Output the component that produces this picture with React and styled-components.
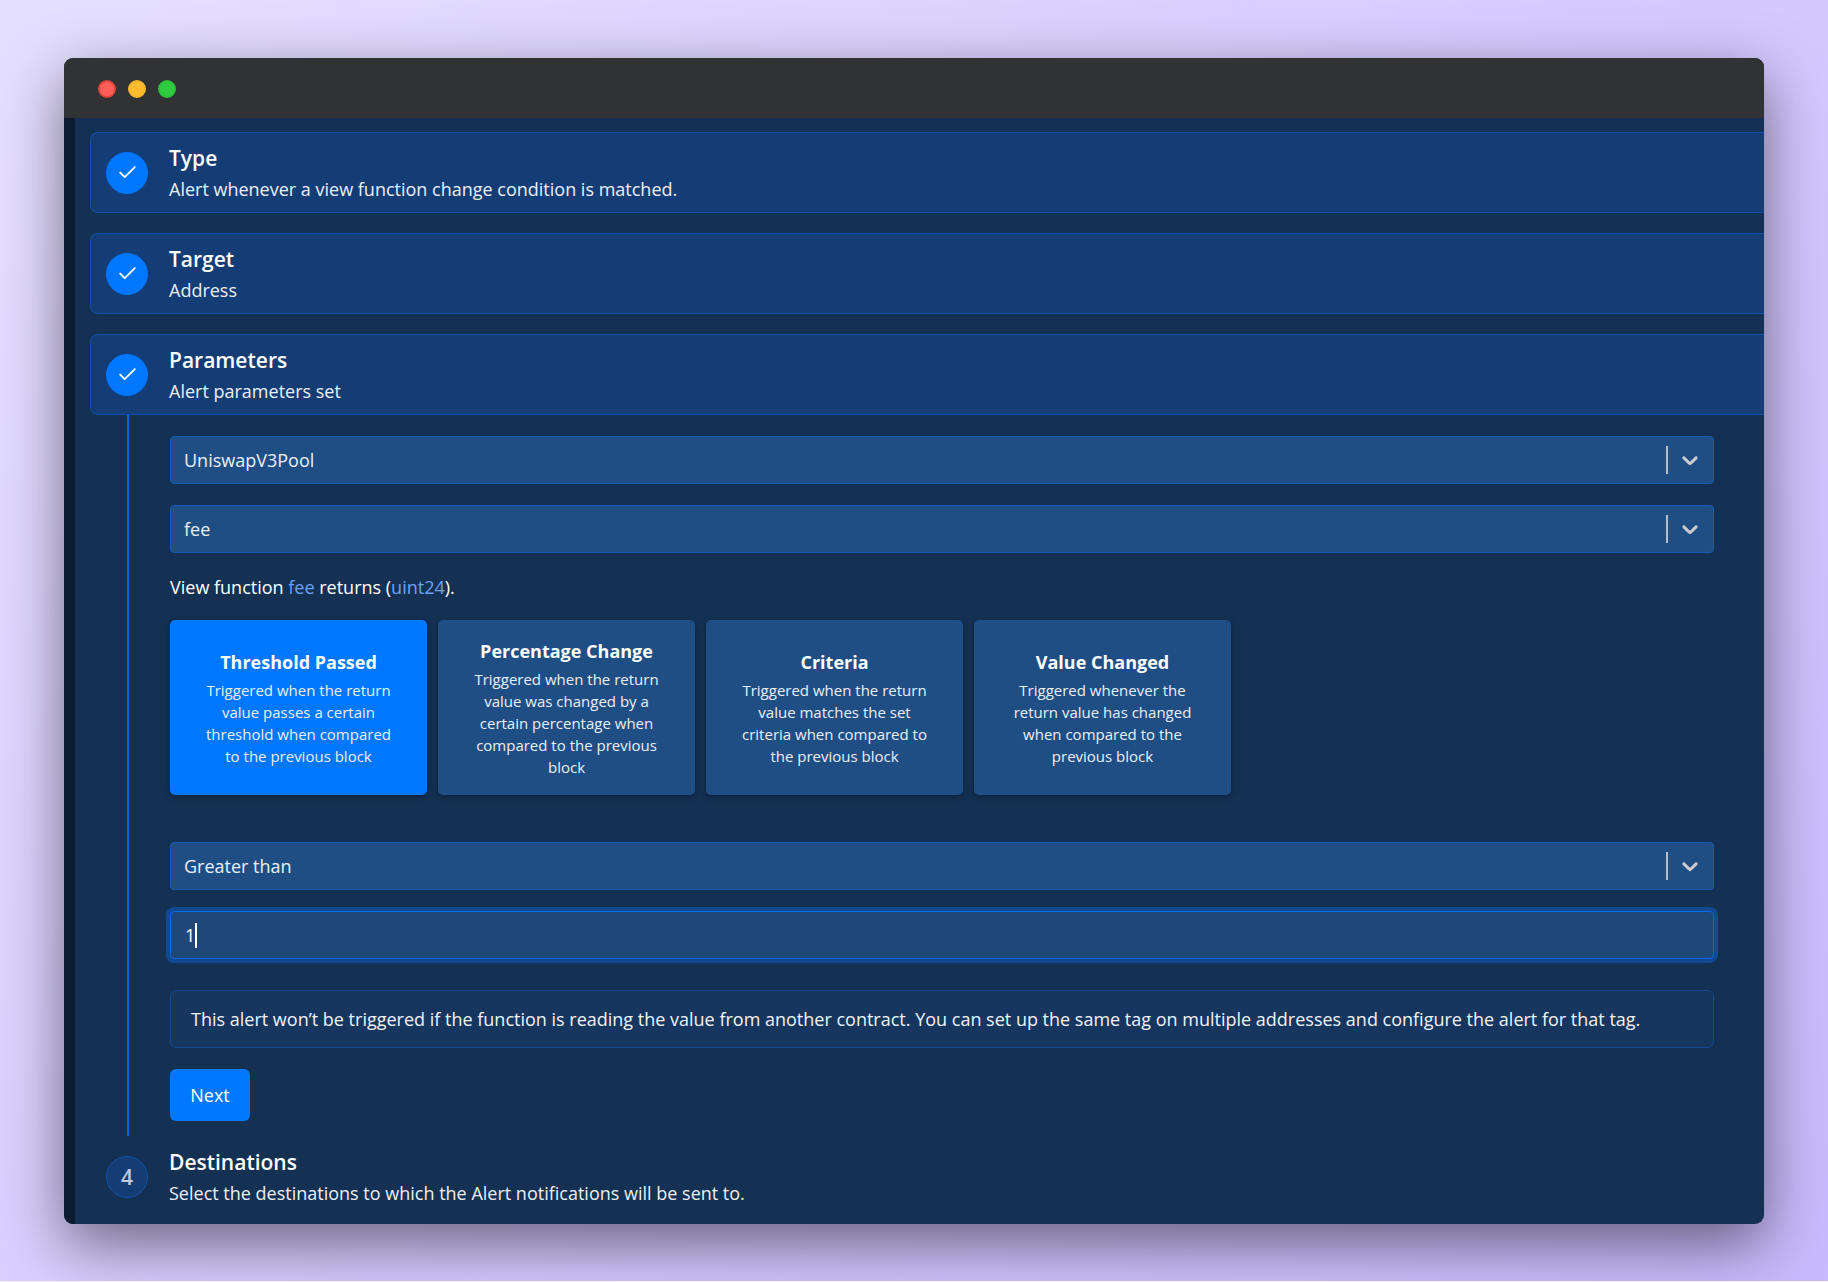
import React, { useState } from "react";
import styled, { createGlobalStyle } from "styled-components";

const GlobalStyle = createGlobalStyle`
  *, *::before, *::after { box-sizing: border-box; }
  body {
    margin: 0;
    background: #f3f0ff;
    color: #fff;
    font-family: "Open Sans", "Noto Sans", sans-serif;
    font-size: 18px;
    line-height: 30px;
  }
  h2, h3, p { margin: 0; }
  button, input, select { font: inherit; color: inherit; }
`;

const Backdrop = styled.main`
  display: flex;
  min-height: calc(100vh - 1px);
  padding: 58px 64px 57px;
  background: linear-gradient(135deg, #e6e0ff 0%, #d6cbff 50%, #c9b9fd 100%);
`;

const Window = styled.section`
  flex: 1;
  display: flex;
  flex-direction: column;
  min-width: 0;
  border-radius: 9px;
  overflow: hidden;
  background: #143053;
  box-shadow: 0 20px 60px rgba(0, 0, 0, 0.5);
`;

const TitleBar = styled.header`
  display: flex;
  gap: 12px;
  padding: 22px 34px 20px;
  background: #303233;
`;

const Light = styled.span`
  width: 18px;
  height: 18px;
  border-radius: 50%;
  background: ${(p) => p.$fill};
  border: 2px solid ${(p) => p.$edge};
`;

const Body = styled.div`
  flex: 1;
  border-left: 11px solid #0a1b30;
  padding: 14px 0 0 15px;
`;

const Steps = styled.ol`
  display: flex;
  flex-direction: column;
  gap: 20px;
  margin: 0;
  padding: 0;
  list-style: none;
`;

const StepHeader = styled.div`
  display: flex;
  align-items: center;
  gap: 21px;
  height: 81px;
  padding: 0 15px;
  border: 1px solid ${(p) => (p.$done ? "#1150a8" : "transparent")};
  border-right: 0;
  border-radius: 8px 0 0 8px;
  background: ${(p) => (p.$done ? "#153d75" : "transparent")};
`;

const Marker = styled.span`
  display: grid;
  place-items: center;
  width: 42px;
  height: 42px;
  border-radius: 50%;
  border: 1px solid ${(p) => (p.$done ? "#0077ff" : "#1152aa")};
  background: ${(p) => (p.$done ? "#0077ff" : "#153d75")};
  color: ${(p) => (p.$done ? "#fff" : "#c2cad8")};
  font-size: 21px;
  font-weight: 600;
`;

const StepText = styled.div`
  display: flex;
  flex-direction: column;
  gap: 1px;
  padding-top: 2px;
`;

const StepTitle = styled.h2`
  font-size: 21px;
  line-height: 30px;
  font-weight: 600;
`;

const StepSummary = styled.p`
  color: #ebeff5;
`;

const StepContent = styled.form`
  display: flex;
  flex-direction: column;
  margin-left: 37px;
  padding: 21px 50px 15px 41px;
  border-left: 2px solid #1063d6;
`;

const Fields = styled.div`
  display: flex;
  flex-direction: column;
  gap: 21px;
`;

const SelectBox = styled.div`
  display: grid;
  align-items: center;
  > * { grid-area: 1 / 1; }
`;

const Select = styled.select`
  appearance: none;
  width: 100%;
  height: 48px;
  padding: 0 60px 0 13px;
  border: 1px solid #165cb5;
  border-radius: 4px;
  background: #1f4e85;
  color: #ebeff5;
  outline: none;
`;

const Indicator = styled.span`
  justify-self: end;
  display: flex;
  align-items: center;
  padding-right: 11px;
  gap: 9px;
  color: #ccc;
  pointer-events: none;
  &::before {
    content: "";
    width: 2px;
    height: 28px;
    background: #b5bdc8;
  }
`;

const Signature = styled.p`
  padding: 19px 0 18px;
  code { font: inherit; color: #6ba3f5; }
`;

const Conditions = styled.div`
  display: flex;
  flex-wrap: wrap;
  gap: 11px;
  margin-bottom: 47px;
`;

const Condition = styled.button`
  display: flex;
  flex-direction: column;
  align-items: center;
  justify-content: center;
  gap: 4px;
  width: 257px;
  height: 175px;
  padding: 0 30px;
  border: 0;
  border-radius: 5px;
  background: ${(p) => (p.$active ? "#0077ff" : "#1f4e85")};
  box-shadow: 0 2px 6px rgba(0, 0, 0, 0.3);
  text-align: center;
`;

const ConditionTitle = styled.strong`
  font-size: 18px;
  line-height: 26px;
  font-weight: 700;
`;

const ConditionText = styled.span`
  font-size: 15px;
  line-height: 22px;
  color: #ebeff5;
`;

const InputBox = styled.div`
  display: grid;
  align-items: center;
  > * { grid-area: 1 / 1; }
`;

const TextInput = styled.input`
  width: 100%;
  height: 48px;
  padding: 0 14px;
  border: 1px solid #0a6ae6;
  border-radius: 4px;
  background: #1d4877;
  box-shadow: 0 0 0 4px #104a93;
  caret-color: transparent;
  outline: none;
`;

const Caret = styled.span`
  width: 2px;
  height: 25px;
  margin-left: 25px;
  background: #fff;
  pointer-events: none;
`;

const Notice = styled.p`
  margin: 31px 0 21px;
  padding: 13px 20px;
  border: 1px solid #124a94;
  border-radius: 6px;
  background: #163660;
  color: #f0f3f8;
`;

const NextButton = styled.button`
  align-self: flex-start;
  width: 80px;
  height: 52px;
  padding: 0;
  border: 0;
  border-radius: 6px;
  background: #0077ff;
`;

const conditions = [
  ["Threshold Passed", "Triggered when the return value passes a certain threshold when compared to the previous block"],
  ["Percentage Change", "Triggered when the return value was changed by a certain percentage when compared to the previous block"],
  ["Criteria", "Triggered when the return value matches the set criteria when compared to the previous block"],
  ["Value Changed", "Triggered whenever the return value has changed when compared to the previous block"],
];

function CheckIcon() {
  return (
    <svg width="22" height="22" viewBox="0 0 24 24" fill="none" stroke="currentColor" strokeWidth="2" strokeLinecap="round" strokeLinejoin="round" aria-hidden="true">
      <path d="M20.500 5.500L9.500 16.500l-5-5" />
    </svg>
  );
}

function ChevronIcon() {
  return (
    <svg width="26" height="26" viewBox="0 0 20 20" fill="currentColor" aria-hidden="true">
      <path d="M4.516 7.548c0.436-0.446 1.043-0.481 1.576 0l3.908 3.747 3.908-3.747c0.533-0.481 1.141-0.446 1.574 0 0.436 0.445 0.408 1.197 0 1.615-0.406 0.418-4.695 4.502-4.695 4.502-0.217 0.223-0.502 0.335-0.787 0.335s-0.57-0.112-0.789-0.335c0 0-4.287-4.084-4.695-4.502s-0.436-1.17 0-1.615z" />
    </svg>
  );
}

function Dropdown({ label, value }) {
  return (
    <SelectBox>
      <Select aria-label={label} defaultValue={value}>
        <option>{value}</option>
      </Select>
      <Indicator>
        <ChevronIcon />
      </Indicator>
    </SelectBox>
  );
}

function Step({ number, done, title, summary }) {
  return (
    <StepHeader $done={done}>
      <Marker $done={done}>{done ? <CheckIcon /> : number}</Marker>
      <StepText>
        <StepTitle>{title}</StepTitle>
        <StepSummary>{summary}</StepSummary>
      </StepText>
    </StepHeader>
  );
}

export default function App() {
  const [active, setActive] = useState(0);
  const [threshold, setThreshold] = useState("1");

  return (
    <>
      <GlobalStyle />
      <Backdrop>
        <Window>
          <TitleBar>
            <Light $fill="#ff5f57" $edge="#e0443e" />
            <Light $fill="#febc2e" $edge="#f5b52e" />
            <Light $fill="#2fcb41" $edge="#2cc03c" />
          </TitleBar>
          <Body>
            <Steps>
              <li>
                <Step number={1} done title="Type" summary="Alert whenever a view function change condition is matched." />
              </li>
              <li>
                <Step number={2} done title="Target" summary="Address" />
              </li>
              <li>
                <Step number={3} done title="Parameters" summary="Alert parameters set" />
                <StepContent onSubmit={(e) => e.preventDefault()}>
                  <Fields>
                    <Dropdown label="Contract" value="UniswapV3Pool" />
                    <Dropdown label="View function" value="fee" />
                  </Fields>
                  <Signature>
                    View function <code>fee</code> returns (<code>uint24</code>).
                  </Signature>
                  <Conditions>
                    {conditions.map(([title, text], i) => (
                      <Condition key={title} type="button" $active={i === active} aria-pressed={i === active} onClick={() => setActive(i)}>
                        <ConditionTitle>{title}</ConditionTitle>
                        <ConditionText>{text}</ConditionText>
                      </Condition>
                    ))}
                  </Conditions>
                  <Fields>
                    <Dropdown label="Comparison" value="Greater than" />
                    <InputBox>
                      <TextInput aria-label="Threshold" value={threshold} onChange={(e) => setThreshold(e.target.value)} />
                      <Caret />
                    </InputBox>
                  </Fields>
                  <Notice>
                    This alert won’t be triggered if the function is reading the value from another contract. You can set up the same tag on multiple addresses and configure the alert for that tag.
                  </Notice>
                  <NextButton type="submit">Next</NextButton>
                </StepContent>
                <Step number={4} title="Destinations" summary="Select the destinations to which the Alert notifications will be sent to." />
              </li>
            </Steps>
          </Body>
        </Window>
      </Backdrop>
    </>
  );
}
